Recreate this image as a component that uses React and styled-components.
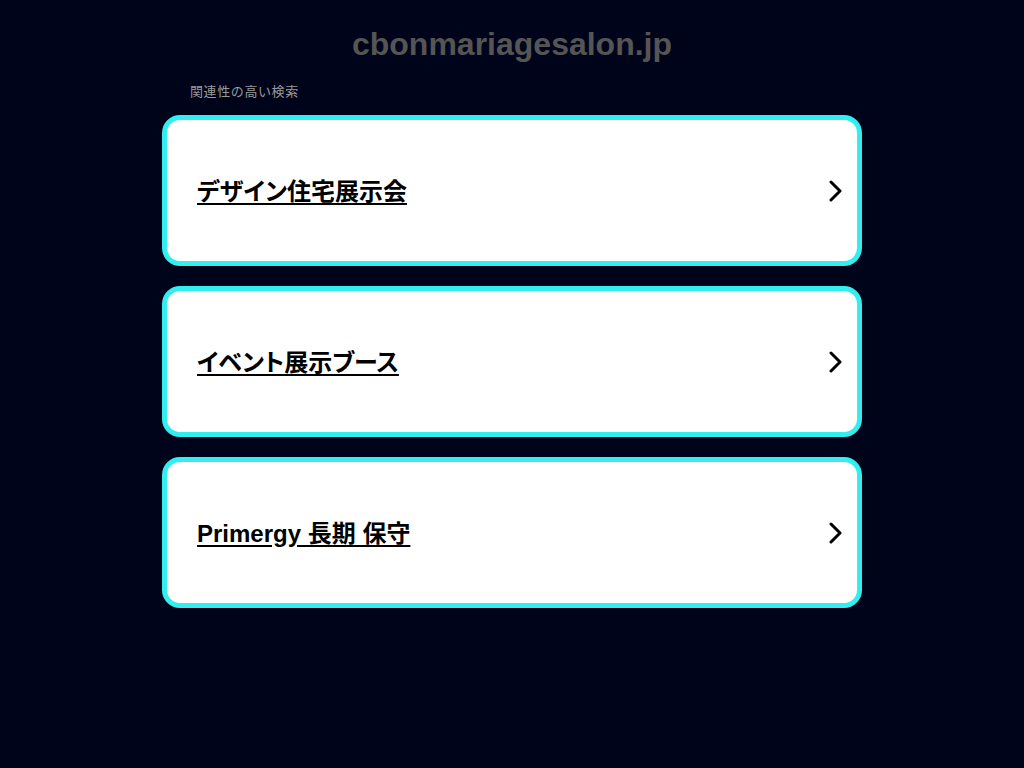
import React from 'react';
import styled, { createGlobalStyle } from 'styled-components';

const GlobalStyle = createGlobalStyle`
    html, body {
        margin: 0;
        padding: 0;
        background: #00041a;
        font-family: "Liberation Sans", Arial, "Noto Sans CJK JP", sans-serif;
    }
`

const Page = styled.div`
    min-height: 768px;
    background: #00041a;
    display: flex;
    flex-direction: column;
    align-items: center;
`

const Title = styled.h1`
    margin: 24px 0 0;
    font-size: 32px;
    line-height: 40px;
    font-weight: bold;
    color: #555555;
`

const Results = styled.div`
    width: 700px;
    margin-top: 20px;
`

const Label = styled.div`
    font-size: 13px;
    line-height: 16px;
    color: #999999;
    padding-left: 28px;
    margin-bottom: 15px;
    letter-spacing: 0.6px;
`

const List = styled.div`
    display: flex;
    flex-direction: column;
    gap: 20px;
`

const Card = styled.a`
    box-sizing: border-box;
    height: 151px;
    display: flex;
    align-items: center;
    justify-content: space-between;
    padding: 0 13px 0 30px;
    background: #ffffff;
    border: 5px solid #33eeee;
    border-radius: 18px;
    color: #000000;
    text-decoration: none;
`

const CardText = styled.span`
    font-size: 24px;
    font-weight: bold;
    text-decoration: underline;
    text-underline-offset: 3px;
    font-feature-settings: "palt";
    margin-bottom: 3px;
`

const Chevron = () => (
    <svg width="16" height="22" viewBox="0 0 16 22">
        <path d="M3 2 L12 11 L3 20" fill="none" stroke="#000" strokeWidth="3" strokeLinecap="round" strokeLinejoin="round" />
    </svg>
)

const items = ['デザイン住宅展示会', 'イベント展示ブース', 'Primergy 長期 保守']

const App = () => (
    <Page>
        <GlobalStyle />
        <Title>cbonmariagesalon.jp</Title>
        <Results>
            <Label>関連性の高い検索</Label>
            <List>
                {items.map((item) => (
                    <Card href="#" key={item}>
                        <CardText>{item}</CardText>
                        <Chevron />
                    </Card>
                ))}
            </List>
        </Results>
    </Page>
);

export default App;
